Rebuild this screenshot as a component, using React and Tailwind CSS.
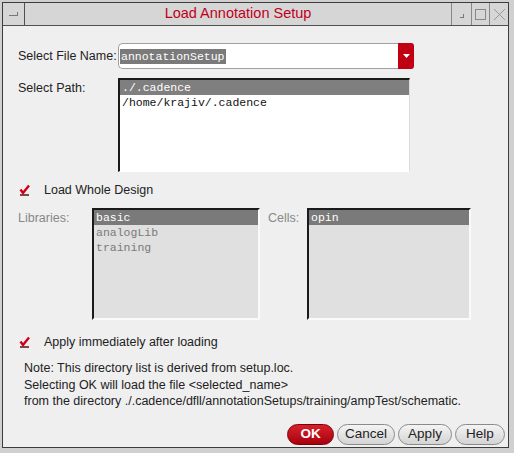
import React from "react";

const sans = { fontFamily: '"Liberation Sans", Arial, sans-serif' };
const mono = { fontFamily: '"Liberation Mono", "Courier New", monospace' };

function Check() {
  return (
    <svg width="12" height="12" viewBox="0 0 12 12" className="shrink-0">
      <line x1="1" y1="11" x2="10" y2="11" stroke="#5a1010" strokeWidth="1.5" />
      <path d="M1.5 5.5 L4 9 L10 1.5" fill="none" stroke="#d0001a" strokeWidth="2.4" />
    </svg>
  );
}

function Btn({ children, red }) {
  return (
    <div
      className={
        "h-[21px] rounded-full flex items-center justify-center text-[13.5px] border " +
        (red
          ? "bg-gradient-to-b from-[#d8202a] to-[#a8000c] border-[#7a0008] text-white font-bold"
          : "bg-gradient-to-b from-[#f4f4f4] to-[#d4d4d4] border-[#8a8a8a] text-[#222]")
      }
      style={sans}
    >
      {children}
    </div>
  );
}

export default function App() {
  return (
    <div className="w-[514px] h-[453px] bg-[#d0d0d0] pl-[2px] pt-[2px] pr-[5px] pb-[5px]" style={sans}>
      <div className="w-full h-full border border-[#3c3c3c] bg-[#efefef] flex flex-col">
        {/* title bar */}
        <div className="h-[23px] bg-[#d6d6d6] border-b border-[#505050] flex items-stretch shrink-0">
          <div className="w-[22px] border-r border-[#505050] flex items-center justify-center">
            <div className="w-[9px] h-[4px] border-b border-r border-[#777]"></div>
          </div>
          <div className="flex-1 flex items-center justify-center text-[14.5px] text-[#c0001a]">
            Load Annotation Setup
          </div>
          <div className="w-[20px] border-l border-[#888] flex items-center justify-center">
            <div className="w-[4px] h-[4px] border-b border-r border-[#777] mt-[3px]"></div>
          </div>
          <div className="w-[18px] border-l border-[#888] flex items-center justify-center">
            <div className="w-[11px] h-[11px] border border-[#888]"></div>
          </div>
          <div className="w-[19px] border-l border-[#888] flex items-center justify-center">
            <svg width="13" height="13" viewBox="0 0 13 13">
              <path d="M1 1 L12 12 M12 1 L1 12" stroke="#999" strokeWidth="1" />
            </svg>
          </div>
        </div>

        {/* content */}
        <div className="flex-1 flex flex-col pl-[15px] pr-[2px] relative text-[12.5px]">
          <div className="flex items-center mt-[17px] h-[26px]">
            <div className="w-[100px] text-[#222]">Select File Name:</div>
            <div className="w-[296px] h-[26px] flex">
              <div className="flex-1 bg-white rounded-l-[5px] border-t border-l border-b border-[#a0a0a0] flex items-center pl-[1px]">
                <span className="bg-[#7a7a7a] text-white text-[11.5px] leading-[15px] px-[1px]" style={mono}>
                  annotationSetup
                </span>
              </div>
              <div className="w-[16px] bg-[#c00012] rounded-r-[3px] flex items-center justify-center">
                <svg width="7" height="4" viewBox="0 0 7 4">
                  <path d="M0 0 L7 0 L3.5 4 Z" fill="#fff" />
                </svg>
              </div>
            </div>
          </div>

          <div className="flex mt-[9px]">
            <div className="w-[100px] text-[#222] pt-[1px]">Select Path:</div>
            <div className="w-[292px] h-[94px] bg-white border-t-2 border-l-2 border-[#1a1a1a] border-r border-b border-r-[#ddd] border-b-[#fff] text-[11.5px]" style={mono}>
              <div className="bg-[#7f7f7f] text-white h-[15px] leading-[15px] pl-[2px]">./.cadence</div>
              <div className="text-[#111] h-[15px] leading-[15px] pl-[2px]">/home/krajiv/.cadence</div>
            </div>
          </div>

          <div className="flex items-center gap-[13px] mt-[11px] h-[14px] pl-[1px]">
            <Check />
            <span className="text-[#222]">Load Whole Design</span>
          </div>

          <div className="flex mt-[11px]">
            <div className="w-[74px] text-[#888] pt-[1px]">Libraries:</div>
            <div className="w-[168px] h-[112px] bg-[#e0e0e0] border-t-2 border-l-2 border-[#1a1a1a] border-r-2 border-b-2 border-r-[#fafafa] border-b-[#fafafa] text-[11.5px]" style={mono}>
              <div className="bg-[#7a7a7a] text-white h-[15px] leading-[15px] pl-[2px]">basic</div>
              <div className="text-[#7a7a7a] h-[15px] leading-[15px] pl-[2px]">analogLib</div>
              <div className="text-[#7a7a7a] h-[15px] leading-[15px] pl-[2px]">training</div>
            </div>
            <div className="w-[47px] text-[#888] pl-[8px] pt-[1px]">Cells:</div>
            <div className="w-[164px] h-[112px] bg-[#e0e0e0] border-t-2 border-l-2 border-[#1a1a1a] border-r-2 border-b-2 border-r-[#fafafa] border-b-[#fafafa] text-[11.5px]" style={mono}>
              <div className="bg-[#7a7a7a] text-white h-[15px] leading-[15px] pl-[2px]">opin</div>
            </div>
          </div>

          <div className="flex items-center gap-[13px] mt-[15px] h-[14px] pl-[1px]">
            <Check />
            <span className="text-[#222]">Apply immediately after loading</span>
          </div>

          <div className="mt-[11px] pl-[6px] leading-[16.5px] text-[#222]">
            <div>Note: This directory list is derived from setup.loc.</div>
            <div>Selecting OK will load the file &lt;selected_name&gt;</div>
            <div>from the directory ./.cadence/dfll/annotationSetups/training/ampTest/schematic.</div>
          </div>

          <div className="flex justify-end gap-[3px] mt-[14px] pr-[1px]">
            <div className="w-[47px]"><Btn red>OK</Btn></div>
            <div className="w-[58px]"><Btn>Cancel</Btn></div>
            <div className="w-[54px]"><Btn>Apply</Btn></div>
            <div className="w-[50px]"><Btn>Help</Btn></div>
          </div>
        </div>
      </div>
    </div>
  );
}
